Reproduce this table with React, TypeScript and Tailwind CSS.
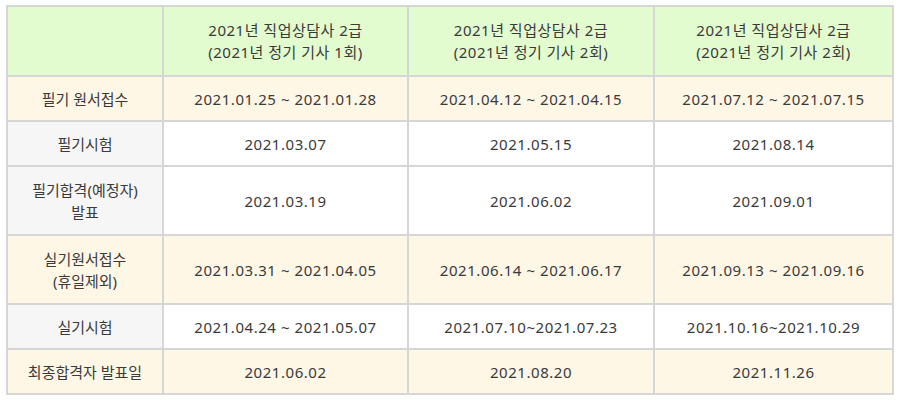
import React from "react";

const rows: { label: React.ReactNode; cells: string[]; bg: string; h: string }[] = [
  { label: "필기 원서접수", cells: ["2021.01.25 ~ 2021.01.28", "2021.04.12 ~ 2021.04.15", "2021.07.12 ~ 2021.07.15"], bg: "bg-[#fff7e6]", h: "h-[45px]" },
  { label: "필기시험", cells: ["2021.03.07", "2021.05.15", "2021.08.14"], bg: "bg-white", h: "h-[45px]" },
  { label: <>필기합격(예정자)<br />발표</>, cells: ["2021.03.19", "2021.06.02", "2021.09.01"], bg: "bg-white", h: "h-[69px]" },
  { label: <>실기원서접수<br />(휴일제외)</>, cells: ["2021.03.31 ~ 2021.04.05", "2021.06.14 ~ 2021.06.17", "2021.09.13 ~ 2021.09.16"], bg: "bg-[#fff7e6]", h: "h-[69px]" },
  { label: "실기시험", cells: ["2021.04.24 ~ 2021.05.07", "2021.07.10~2021.07.23", "2021.10.16~2021.10.29"], bg: "bg-white", h: "h-[45px]" },
  { label: "최종합격자 발표일", cells: ["2021.06.02", "2021.08.20", "2021.11.26"], bg: "bg-[#fff7e6]", h: "h-[45px]" },
];

const heads = ["1회", "2회", "2회"];

export default function App() {
  return (
    <div className="w-[900px] h-[405px] bg-white pt-[5px] pl-[6px] font-['Noto_Sans','Noto_Sans_CJK_KR',sans-serif] text-[15px] text-[#3a3a3a] leading-[22px]">
      <table className="border-collapse table-fixed w-[886px] text-center">
        <colgroup>
          <col className="w-[156px]" />
          <col className="w-[245px]" />
          <col className="w-[246px]" />
          <col className="w-[239px]" />
        </colgroup>
        <thead>
          <tr className="h-[70px] bg-[#e2fbcf]">
            <th className="border-2 border-[#d6d6d6] font-normal"></th>
            {heads.map((n, i) => (
              <th key={i} className="border-2 border-[#d6d6d6] font-normal tracking-[0.5px]">
                2021년 직업상담사 2급<br />(2021년 정기 기사 {n})
              </th>
            ))}
          </tr>
        </thead>
        <tbody>
          {rows.map((r, i) => (
            <tr key={i} className={`${r.h} ${r.bg}`}>
              <td className={`border-2 border-[#d6d6d6] ${r.bg === "bg-white" ? "bg-[#f6f6f6]" : ""}`}>{r.label}</td>
              {r.cells.map((c, j) => (
                <td key={j} className="border-2 border-[#d6d6d6] tracking-[0.55px]">{c}</td>
              ))}
            </tr>
          ))}
        </tbody>
      </table>
    </div>
  );
}
